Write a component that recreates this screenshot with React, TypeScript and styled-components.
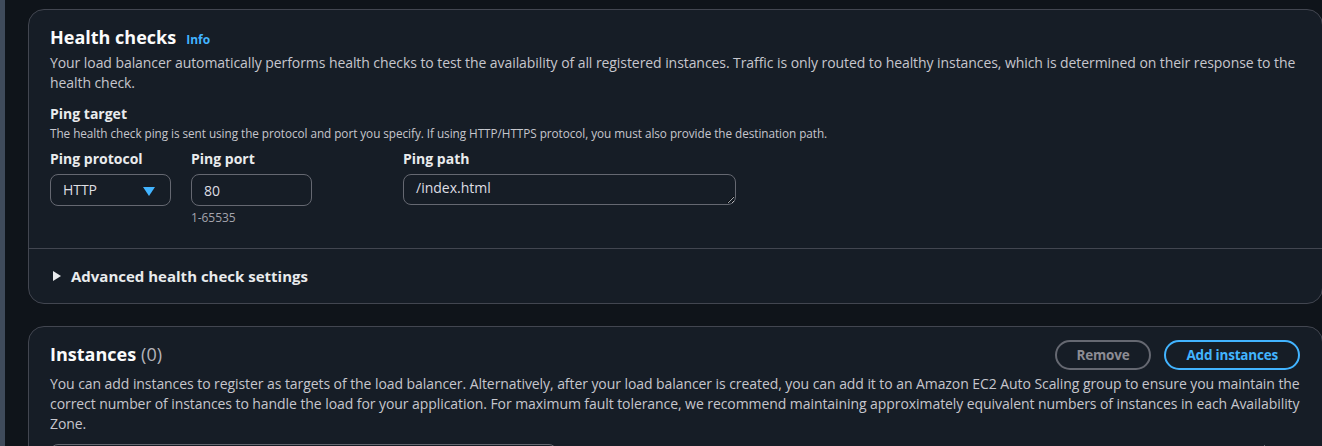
import React from "react";
import styled, { createGlobalStyle } from "styled-components";

const GlobalStyle = createGlobalStyle`
  html, body { margin: 0; padding: 0; background: #0f141a; }
  body {
    font-family: "Open Sans", "Noto Sans", Arial, sans-serif;
    color: #c6c6cd;
    font-size: 14px;
    line-height: 20px;
    letter-spacing: -0.07px;
    color-scheme: dark;
    overflow: hidden;
  }
  * { box-sizing: border-box; }
`;

const Page = styled.div`
  display: flex;
  height: 446px;
  overflow: hidden;
`;

const SideStrip = styled.div`
  width: 5px;
  flex: none;
  background: #3f4b5b;
`;

const Main = styled.main`
  flex: 1;
  display: flex;
  flex-direction: column;
  gap: 22px;
  padding: 9px 0 0 23px;
  margin-right: -1px;
`;

const Card = styled.section`
  background: #161d26;
  border: 1px solid #424650;
  border-radius: 16px;
  flex: none;
`;

const CardBody = styled.div<{ $bottom?: number }>`
  padding: 16px 22px ${(p) => p.$bottom ?? 22}px 21px;
`;

const HeaderRow = styled.div`
  display: flex;
  align-items: flex-start;
  justify-content: space-between;
  gap: 16px;
`;

const Title = styled.h2`
  margin: 0;
  font-size: 18px;
  line-height: 22px;
  font-weight: 700;
  color: #fbfbfb;
  letter-spacing: 0;
  display: flex;
  align-items: baseline;
  gap: 10px;
`;

const Counter = styled.span`
  font-weight: 400;
  color: #b4b4bb;
  margin-left: -5px;
`;

const InfoLink = styled.a`
  font-size: 12px;
  font-weight: 700;
  color: #42b4ff;
  text-decoration: none;
  letter-spacing: 0;
`;

const Description = styled.p<{ $top?: number }>`
  margin: ${(p) => p.$top ?? 2}px 0 0;
  font-size: 14px;
  line-height: 20px;
  color: #c6c6cd;
`;

const SubHeading = styled.h3`
  margin: 11px 0 0;
  font-size: 14px;
  line-height: 20px;
  font-weight: 700;
  color: #e9ebed;
  letter-spacing: 0;
`;

const SmallText = styled.div<{ $top?: number }>`
  margin-top: ${(p) => p.$top ?? 0}px;
  font-size: 11.75px;
  line-height: 16px;
  letter-spacing: -0.05px;
  color: #c6c6cd;
`;

const FieldGrid = styled.div`
  display: grid;
  grid-template-columns: 121px 192px 333px;
  column-gap: 20px;
  margin-top: 8px;
`;

const Field = styled.div`
  display: flex;
  flex-direction: column;
`;

const Label = styled.label`
  font-size: 14px;
  line-height: 20px;
  font-weight: 700;
  color: #e9ebed;
  letter-spacing: 0;
  margin-bottom: 5px;
`;

const SelectBox = styled.div`
  height: 32px;
  border: 1px solid #656871;
  border-radius: 8px;
  display: flex;
  align-items: center;
  justify-content: space-between;
  padding: 0 15px 0 12px;
  color: #dedee3;
  font-size: 14px;
`;

const Caret = styled.svg`
  width: 12px;
  height: 9px;
  margin-top: 3px;
`;

const TextInput = styled.input<{ $width?: number }>`
  width: ${(p) => p.$width ?? 121}px;
  height: 32px;
  border: 1px solid #656871;
  border-radius: 8px;
  background: transparent;
  color: #dedee3;
  font: inherit;
  padding: 0 12px;
  outline: none;
`;

const TextArea = styled.textarea`
  width: 333px;
  height: 31px;
  border: 1px solid #656871;
  border-radius: 8px;
  background: transparent;
  color: #dedee3;
  font: inherit;
  padding: 3px 12px;
  outline: none;
  resize: vertical;
  overflow: hidden;
  line-height: 20px;
`;

const Constraint = styled.div`
  margin-top: 4px;
  font-size: 12px;
  line-height: 16px;
  color: #a4a4ad;
`;

const Divider = styled.hr`
  margin: 0;
  border: 0;
  border-top: 1px solid #424650;
`;

const Expander = styled.div`
  display: flex;
  align-items: center;
  gap: 10px;
  padding: 17px 20px 17px 24px;
  font-size: 15px;
  line-height: 20px;
  font-weight: 700;
  color: #e9ebed;
  letter-spacing: 0;
`;

const Arrow = styled.svg`
  width: 8px;
  height: 10px;
`;

const Actions = styled.div`
  display: flex;
  gap: 13px;
  margin-top: -3px;
`;

const Button = styled.button<{ $primary?: boolean }>`
  height: 30px;
  padding: 0 20px;
  border-radius: 20px;
  border: 2px solid ${(p) => (p.$primary ? "#42b4ff" : "#656871")};
  background: transparent;
  color: ${(p) => (p.$primary ? "#42b4ff" : "#8c8c94")};
  font: inherit;
  font-weight: 700;
  font-size: 13.5px;
  letter-spacing: -0.2px;
  cursor: pointer;
`;

const ToolsRow = styled.div`
  display: flex;
  align-items: flex-start;
  justify-content: space-between;
  margin-top: 10px;
`;

const FilterBox = styled.div`
  width: 507px;
  height: 32px;
  border: 1px solid #656871;
  border-radius: 8px;
`;

const Pager = styled.div`
  width: 36px;
  height: 32px;
  border-left: 1px solid #656871;
  margin-top: 1px;
`;

export default function App() {
  return (
    <>
      <GlobalStyle />
      <Page>
        <SideStrip />
        <Main>
          <Card>
            <CardBody>
              <Title>
                Health checks <InfoLink href="#">Info</InfoLink>
              </Title>
              <Description>
                Your load balancer automatically performs health checks to test the availability of all registered
                instances. Traffic is only routed to healthy instances, which is determined on their response to the
                health check.
              </Description>
              <SubHeading>Ping target</SubHeading>
              <SmallText $top={1}>
                The health check ping is sent using the protocol and port you specify. If using HTTP/HTTPS protocol, you
                must also provide the destination path.
              </SmallText>
              <FieldGrid>
                <Field>
                  <Label>Ping protocol</Label>
                  <SelectBox>
                    <span>HTTP</span>
                    <Caret viewBox="0 0 12 9">
                      <path d="M0 0 H12 L6 9 Z" fill="#42b4ff" />
                    </Caret>
                  </SelectBox>
                </Field>
                <Field>
                  <Label>Ping port</Label>
                  <TextInput defaultValue="80" />
                  <Constraint>1-65535</Constraint>
                </Field>
                <Field>
                  <Label>Ping path</Label>
                  <TextArea defaultValue="/index.html" rows={1} />
                </Field>
              </FieldGrid>
            </CardBody>
            <Divider />
            <Expander>
              <Arrow viewBox="0 0 8 10">
                <path d="M0 0 L8 5 L0 10 Z" fill="#e9ebed" />
              </Arrow>
              Advanced health check settings
            </Expander>
          </Card>
          <Card>
            <CardBody>
              <HeaderRow>
                <Title>
                  Instances <Counter>(0)</Counter>
                </Title>
                <Actions>
                  <Button>Remove</Button>
                  <Button $primary>Add instances</Button>
                </Actions>
              </HeaderRow>
              <Description $top={4}>
                You can add instances to register as targets of the load balancer. Alternatively, after your load
                balancer is created, you can add it to an Amazon EC2 Auto Scaling group to ensure you maintain the
                correct number of instances to handle the load for your application. For maximum fault tolerance, we
                recommend maintaining approximately equivalent numbers of instances in each Availability Zone.
              </Description>
              <ToolsRow>
                <FilterBox />
                <Pager />
              </ToolsRow>
            </CardBody>
          </Card>
        </Main>
      </Page>
    </>
  );
}
